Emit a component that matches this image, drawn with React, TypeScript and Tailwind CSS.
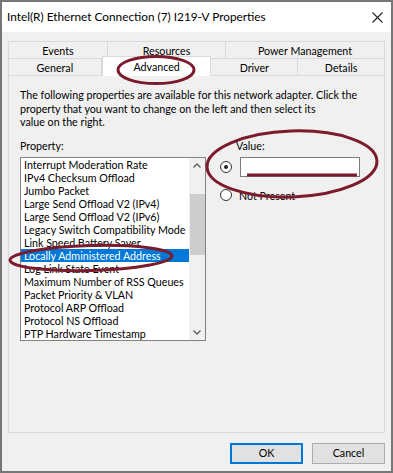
import React from 'react';

const properties = [
  'Interrupt Moderation Rate',
  'IPv4 Checksum Offload',
  'Jumbo Packet',
  'Large Send Offload V2 (IPv4)',
  'Large Send Offload V2 (IPv6)',
  'Legacy Switch Compatibility Mode',
  'Link Speed Battery Saver',
  'Locally Administered Address',
  'Log Link State Event',
  'Maximum Number of RSS Queues',
  'Packet Priority & VLAN',
  'Protocol ARP Offload',
  'Protocol NS Offload',
  'PTP Hardware Timestamp',
];

const SELECTED = 'Locally Administered Address';

function Tab({ label, w, selected }: { label: string; w: string; selected?: boolean }) {
  if (selected) {
    return (
      <div className={`${w} relative z-10 -mt-[2px] -mb-[1px] h-[20px] flex items-center justify-center bg-white border border-b-0 border-[#d9d9d9] leading-[13px]`}>
        {label}
      </div>
    );
  }
  return (
    <div className={`${w} h-[17px] flex items-center justify-center bg-[#f0f0f0] border border-b-0 border-[#d9d9d9] -ml-px first:ml-0 leading-[13px]`}>
      {label}
    </div>
  );
}

function Radio({ checked }: { checked?: boolean }) {
  return (
    <span className="w-[12px] h-[12px] rounded-full border border-[#333] bg-white flex items-center justify-center shrink-0">
      {checked && <span className="w-[4px] h-[4px] rounded-full bg-[#222]" />}
    </span>
  );
}

function Annotations() {
  // red hand-drawn circles laid over the screenshot
  return (
    <svg className="absolute inset-0 pointer-events-none z-20" width="393" height="473" viewBox="0 0 393 473">
      <g fill="none" stroke="#7b1b2b" strokeWidth="3">
        <ellipse cx="154" cy="68" rx="38" ry="13.5" />
        <ellipse cx="290" cy="162" rx="85" ry="33" transform="rotate(-2 290 162)" />
        <ellipse cx="89" cy="256" rx="81" ry="12.5" transform="rotate(-1.5 89 256)" />
      </g>
      <line x1="245" y1="173" x2="355" y2="173" stroke="#7b1b2b" strokeWidth="3" />
    </svg>
  );
}

export default function App() {
  return (
    <div
      className="relative w-[393px] h-[473px] border-2 border-[#767676] bg-[#f0f0f0] flex flex-col text-[10.7px] text-black overflow-hidden"
      style={{ fontFamily: 'Lato, "Noto Sans", "Liberation Sans", sans-serif' }}
    >
      {/* Title bar */}
      <div className="h-[30px] bg-white flex items-center justify-between pl-[5px] pr-[6px] shrink-0">
        <span className="text-[11.8px] leading-[14px]">Intel(R) Ethernet Connection (7) I219-V Properties</span>
        <svg width="11" height="11" viewBox="0 0 11 11" className="mr-[2px]">
          <path d="M0.5 0.5 L10.5 10.5 M10.5 0.5 L0.5 10.5" stroke="#222" strokeWidth="1.1" />
        </svg>
      </div>

      {/* Body */}
      <div className="flex-1 flex flex-col px-[6px] pt-[9px]">
        {/* Tabs */}
        <div className="flex flex-col">
          <div className="flex">
            <Tab label="Events" w="w-[100px]" />
            <Tab label="Resources" w="w-[119px]" />
            <Tab label="Power Management" w="w-[160px]" />
          </div>
          <div className="flex items-end">
            <Tab label="General" w="w-[94px]" />
            <Tab label="Advanced" w="w-[110px]" selected />
            <Tab label="Driver" w="w-[88px]" />
            <Tab label="Details" w="w-[88px]" />
          </div>
        </div>

        {/* Tab page */}
        <div className="h-[358px] border border-[#d9d9d9] bg-[#f0f0f0] px-[11px] pt-[12px] flex flex-col">
          <p className="leading-[13.5px] w-[340px]">
            The following properties are available for this network adapter. Click the property that you want to change on the left and then select its
            <br />
            value on the right.
          </p>

          <div className="flex mt-[10px]">
            <div className="flex flex-col w-[186px]">
              <span className="leading-[13px]">Property:</span>
              <div className="mt-[5px] h-[184px] border border-[#828282] bg-white flex">
                <ul className="flex-1 flex flex-col">
                  {properties.map((p) => (
                    <li
                      key={p}
                      className={`h-[13px] leading-[13px] pl-[3px] whitespace-nowrap overflow-hidden ${p === SELECTED ? 'bg-[#0078d7] text-white' : ''}`}
                    >
                      {p}
                    </li>
                  ))}
                </ul>
                {/* Scrollbar */}
                <div className="w-[16px] bg-[#f0f0f0] flex flex-col items-center">
                  <svg width="16" height="16" viewBox="0 0 16 16" className="shrink-0">
                    <path d="M4.5 9.5 L8 6 L11.5 9.5" fill="none" stroke="#606060" strokeWidth="1.4" />
                  </svg>
                  <div className="w-[15px] h-[20px]" />
                  <div className="w-[15px] h-[61px] bg-[#cdcdcd]" />
                  <div className="flex-1" />
                  <svg width="16" height="16" viewBox="0 0 16 16" className="shrink-0">
                    <path d="M4.5 6.5 L8 10 L11.5 6.5" fill="none" stroke="#606060" strokeWidth="1.4" />
                  </svg>
                </div>
              </div>
            </div>

            <div className="flex flex-col ml-[14px]">
              <span className="leading-[13px] ml-[16px]">Value:</span>
              <div className="flex items-center mt-[5px]">
                <Radio checked />
                <div className="ml-[8px] w-[120px] h-[20px] bg-white border border-[#7a7a7a]" />
              </div>
              <div className="flex items-center mt-[12px]">
                <Radio />
                <span className="ml-[7px] leading-[13px]">Not Present</span>
              </div>
            </div>
          </div>
        </div>

        {/* Buttons */}
        <div className="flex justify-end gap-[9px] mt-[10px]">
          <button className="w-[73px] h-[21px] bg-[#e1e1e1] border-2 border-[#0078d7] flex items-center justify-center">
            OK
          </button>
          <button className="w-[73px] h-[21px] bg-[#e1e1e1] border border-[#adadad] flex items-center justify-center">
            Cancel
          </button>
        </div>
      </div>

      <Annotations />
    </div>
  );
}
